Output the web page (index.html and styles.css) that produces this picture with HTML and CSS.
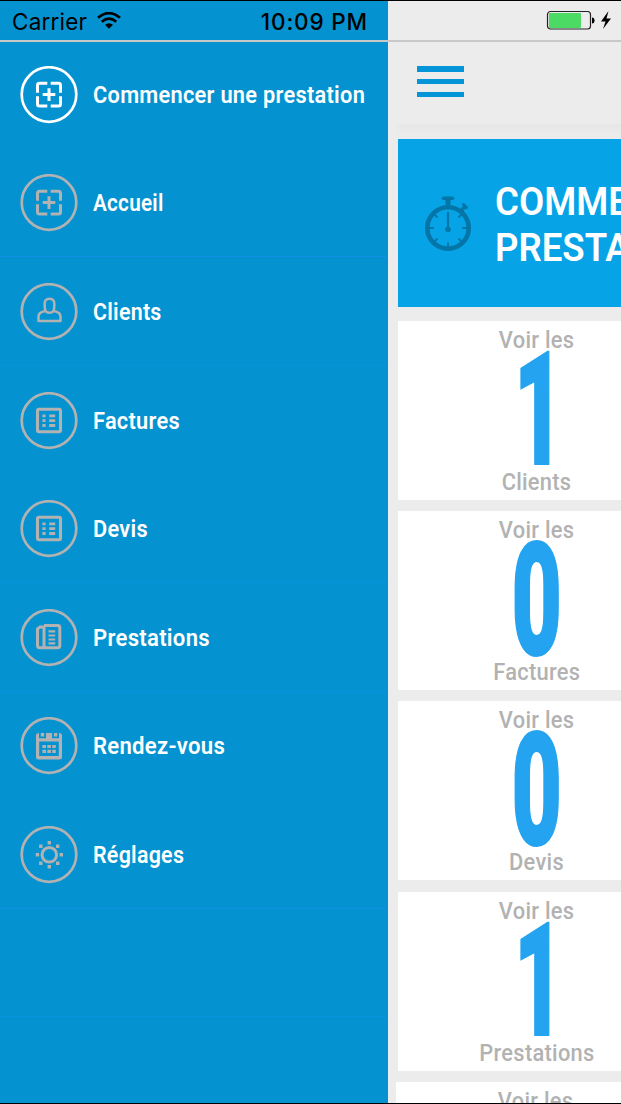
FILE: index.html
```html
<!DOCTYPE html>
<html lang="fr">
<head>
<meta charset="utf-8">
<title>Accueil</title>
<link rel="stylesheet" href="styles.css">
</head>
<body>
<svg class="defs" width="0" height="0" aria-hidden="true">
  <defs>
    <symbol id="ring" viewBox="0 0 58 58"><circle cx="29" cy="28.500" r="27.300" fill="none" stroke="currentColor" stroke-width="2.700"/></symbol>
    <symbol id="add" viewBox="0 0 58 58">
      <use href="#ring"/>
      <path d="M27.300 17.200H19.500Q17.500 17.200 17.500 19.200V26.700M30.700 17.200H38.500Q40.500 17.200 40.500 19.200V26.700M17.500 30.200V38Q17.500 40 19.500 40H27.300M30.700 40H38.500Q40.500 40 40.500 38V30.200" fill="none" stroke="currentColor" stroke-width="3"/>
      <path d="M29 22.300V34.900M22.700 28.600H35.300" stroke="currentColor" stroke-width="3"/>
    </symbol>
    <symbol id="person" viewBox="0 0 58 58">
      <use href="#ring"/>
      <path d="M25.600 28Q24.600 26 24.600 21Q24.600 15.700 29.500 15.700Q34.400 15.700 34.400 21Q34.400 26 33.400 28Q32 29.800 29.500 29.800Q27 29.800 25.600 28C20.500 28.800 18.500 30.500 18.500 33.500V38.100H40.500V33.500C40.500 30.500 38.500 28.800 33.400 28" fill="none" stroke="currentColor" stroke-width="2.500" stroke-linejoin="round"/>
    </symbol>
    <symbol id="list" viewBox="0 0 58 58">
      <use href="#ring"/>
      <rect x="17.500" y="17.300" width="23" height="22.500" rx="1.500" fill="none" stroke="currentColor" stroke-width="3.100"/>
      <path d="M22.400 23.900h3.200m3.600 0h6M22.400 28.700h3.200m3.600 0h6M22.400 33.500h3.200m3.600 0h6" stroke="currentColor" stroke-width="2.800"/>
    </symbol>
    <symbol id="news" viewBox="0 0 58 58">
      <use href="#ring"/>
      <path d="M24 16.500H38Q39.800 16.500 39.800 18.500V36.500Q39.800 38.700 38 38.700H19.500Q17.500 38.700 17.500 36.500V20L20 18H24M24 16.500V38.500" fill="none" stroke="currentColor" stroke-width="3"/>
      <path d="M28.500 22.300h6.700M28.500 26.500h6.700M28.500 30.500h6.700M28.500 34.300h6.700" stroke="currentColor" stroke-width="2.200"/>
    </symbol>
    <symbol id="calendar" viewBox="0 0 58 58">
      <use href="#ring"/>
      <path fill-rule="evenodd" fill="currentColor" d="M16 18.500Q16 16 19 16V21.300H26V16H32V21.300H39V16Q42 16 42 18.500V40Q42 42.500 39.500 42.500H18.500Q16 42.500 16 40ZM19.200 24.500V39.100H38.800V24.500Z"/>
      <path d="M20.800 16h3.300v3.500h-3.300zM33.900 16h3.300v3.500h-3.300z" fill="currentColor"/>
      <path d="M22.400 29.500h3.600m1.300 0h3.600m1.300 0h3.600M22.400 34.300h3.600m1.300 0h3.600m1.300 0h3.600" stroke="currentColor" stroke-width="3.200"/>
    </symbol>
    <symbol id="sun" viewBox="0 0 58 58">
      <use href="#ring"/>
      <circle cx="29.300" cy="28.800" r="7.300" fill="none" stroke="currentColor" stroke-width="3"/>
      <path d="M27.600 15.100h3.400v3.400h-3.400zM27.600 39.100h3.400v3.400h-3.400zM15.700 27.100h3.400v3.400h-3.400zM39.600 27.100h3.400v3.400h-3.400zM19.100 18.600h3.400v3.400h-3.400zM36 18.600h3.400v3.400h-3.400zM19.100 35.600h3.400v3.400h-3.400zM36 35.600h3.400v3.400h-3.400z" fill="currentColor"/>
    </symbol>
  </defs>
</svg>
<div class="screen">
  <aside class="sidebar">
    <div class="status">
      <span class="carrier">Carrier</span>
      <svg class="wifi" width="26" height="18" viewBox="0 0 26 18"><path d="M2 5.800Q13 -3.600 24 5.800M5.800 9.700Q13 3.500 20.200 9.700" fill="none" stroke="#000" stroke-width="2.700"/><path d="M9 12.800Q13 9.800 17 12.800L13 16.800Z"/></svg>
      <span class="clock">10:09 PM</span>
    </div>
    <nav class="menu">
      <a class="item active"><svg class="icon"><use href="#add"/></svg><span class="label">Commencer une prestation</span></a>
      <a class="item lined strong"><svg class="icon"><use href="#add"/></svg><span class="label tight">Accueil</span></a>
      <a class="item lined"><svg class="icon"><use href="#person"/></svg><span class="label snug">Clients</span></a>
      <a class="item"><svg class="icon"><use href="#list"/></svg><span class="label">Factures</span></a>
      <a class="item lined"><svg class="icon"><use href="#list"/></svg><span class="label">Devis</span></a>
      <a class="item lined"><svg class="icon"><use href="#news"/></svg><span class="label wide">Prestations</span></a>
      <a class="item"><svg class="icon"><use href="#calendar"/></svg><span class="label wide">Rendez-vous</span></a>
      <a class="item lined strong"><svg class="icon"><use href="#sun"/></svg><span class="label snug">Réglages</span></a>
      <div class="item lined"></div>
    </nav>
  </aside>
  <main class="content">
    <div class="status right">
      <svg width="66" height="22" viewBox="0 0 66 22"><rect x="1.500" y="1.500" width="43" height="17.500" rx="3" fill="none" stroke="#222" stroke-width="1.200"/><rect x="3" y="3" width="32" height="15" rx="1" fill="#4cd964"/><path d="M46 7.500Q48.500 7.500 48.500 10.500T46 13.500Z"/><path d="M62.500 1L55 11.500H59.500L57 19L65 8.500H60.500Z"/></svg>
    </div>
    <header class="topbar"><div class="burger"><i></i><i></i><i></i></div></header>
    <section class="cards">
      <div class="banner">
        <svg class="watch" width="48" height="56" viewBox="0 0 48 56" fill="none" stroke="#0375a6"><circle cx="24" cy="32" r="20.700" stroke-width="4.600"/><path d="M19.500 2.200H28.500" stroke-width="3.600" stroke-linecap="round"/><path d="M24 3V12" stroke-width="5"/><path d="M37 15L41 10.500" stroke-width="3.400"/><path d="M39.500 8.500L42.500 11.500" stroke-width="3" stroke-linecap="round"/><path d="M24 16V32" stroke-width="2.200"/><circle cx="24" cy="33.500" r="2.700" fill="#0375a6" stroke="none"/><path d="M5 32H9.500M38.500 32H43M24 46.500V51M10.700 18.700L13.500 21.500M37.300 18.700L34.500 21.500M10.700 45.300L13.500 42.500M37.300 45.300L34.500 42.500" stroke-width="1.800"/></svg>
        <div class="title">COMMENCER UNE<br>PRESTATION</div>
      </div>
      <div class="card"><span class="cap">Voir les</span><span class="num one">1</span><span class="cap">Clients</span></div>
      <div class="card"><span class="cap">Voir les</span><span class="num">0</span><span class="cap">Factures</span></div>
      <div class="card"><span class="cap">Voir les</span><span class="num">0</span><span class="cap">Devis</span></div>
      <div class="card"><span class="cap">Voir les</span><span class="num one">1</span><span class="cap">Prestations</span></div>
      <div class="card last"><span class="cap">Voir les</span></div>
    </section>
  </main>
</div>
</body>
</html>
```
FILE: styles.css
```css
* { box-sizing: border-box; }
body { margin: 0; background: #ececec; font-family: Roboto, "Liberation Sans", sans-serif; }
.defs { display: block; width: 0; height: 0; }
.screen { display: flex; width: 621px; height: 1104px; overflow: hidden; border-top: 1px solid #000; border-bottom: 1px solid #000; background: #ececec; }
.sidebar { width: 388px; flex: none; background: #0492d0; overflow: hidden; }
.status { display: flex; align-items: center; height: 41px; padding: 1px 20px 0 12px; border-bottom: 2px solid #c8c8c8; font-family: Inter, Roboto, sans-serif; font-size: 22.5px; color: #000; }
.carrier { letter-spacing: 0.2px; width: 84px; }
.wifi { display: block; }
.clock { margin-left: auto; font-weight: 550; letter-spacing: 0.85px; }
.status.right { justify-content: flex-end; padding: 0 9px 0 0; }
.menu { margin-top: -2px; }
.item { display: flex; align-items: center; height: 108.6px; padding: 2px 0 0 20px; color: #b2b2b2; border-bottom: 1px solid transparent; }
.item.active { color: #fff; }
.lined { border-bottom-color: #0b92dd; }
.strong { border-bottom-color: #128fe4; }
.icon { width: 58px; height: 58px; flex: none; }
.label { margin-left: 15px; color: #fff; font-size: 23.5px; font-weight: 600; letter-spacing: 0.3px; white-space: nowrap; transform: scaleX(0.927); transform-origin: left; }
.label.wide { transform: scaleX(0.94); }
.label.snug { transform: scaleX(0.91); }
.label.tight { transform: scaleX(0.88); }
.content { width: 233px; flex: none; overflow: hidden; }
.topbar { height: 82px; padding: 24px 0 0 21px; margin: 0 -20px 0 8px; box-shadow: 0 6px 8px -2px #e5e5e5; clip-path: inset(80px 0 -16px -4px); clip-path: inset(0 0 -16px 0); }
.burger { display: flex; flex-direction: column; justify-content: space-between; width: 47px; height: 31px; }
.burger i { height: 5.5px; background: #0495d8; }
.cards { width: 278px; margin: 15px 0 0 10px; }
.banner { display: flex; align-items: center; height: 168px; margin-bottom: 14px; padding-left: 26px; background: #06a3e7; }
.watch { flex: none; margin-top: 2px; }
.title { margin-left: 23px; color: #fff; font-size: 38.5px; line-height: 46.5px; font-weight: 600; white-space: nowrap; padding-top: 4px; transform: scaleX(0.95); transform-origin: left; }
.card { display: flex; flex-direction: column; align-items: center; height: 179px; margin-bottom: 11.2px; padding-top: 5px; background: #fff; color: #b2b2b2; font-size: 23.5px; font-weight: 500; letter-spacing: 0.3px; line-height: 28px; }
.cap { transform: scaleX(0.93); }
.num { height: 114px; line-height: 114px; color: #24a3f0; font-size: 158px; font-weight: 900; letter-spacing: 0; -webkit-text-stroke: 2px #24a3f0; transform: translateY(-1px) scaleX(0.55); }
.num.one { transform: translate(2px, -1px) scaleX(0.54); }
.last { margin-left: -2px; }
```
